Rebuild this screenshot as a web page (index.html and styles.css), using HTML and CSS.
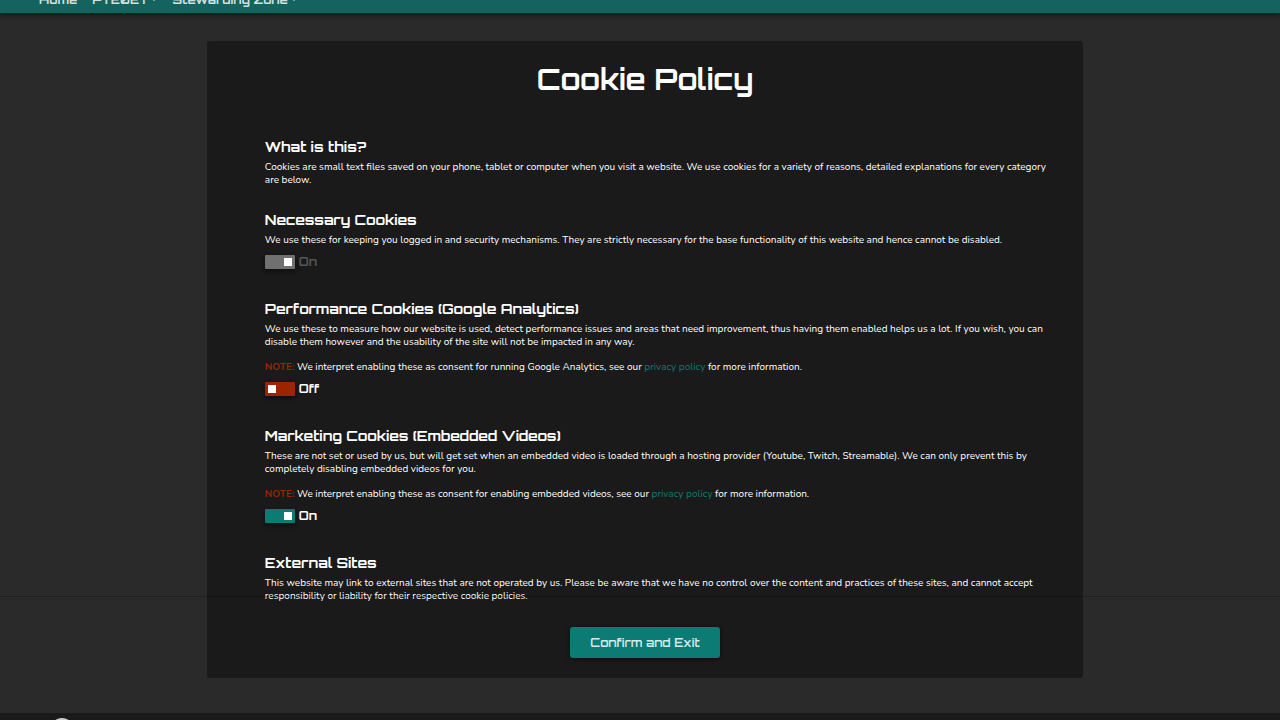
FILE: index.html
```html
<!DOCTYPE html>
<html lang="en">
<head>
  <meta charset="UTF-8">
  <meta name="viewport" content="width=device-width, initial-scale=1.0">
  <title>Cookie Policy</title>
  <link rel="stylesheet" href="styles.css">
</head>
<body>
  <nav class="navbar">
    <a class="nav-link" href="#">Home</a>
    <a class="nav-link" href="#">PTE0ET<span class="caret"></span></a>
    <a class="nav-link" href="#">Stewarding Zone<span class="caret"></span></a>
  </nav>

  <main class="content">
    <div class="policy">
      <h1>Cookie Policy</h1>

      <section>
        <h2>What is this?</h2>
        <p>Cookies are small text files saved on your phone, tablet or computer when you visit a website. We use cookies for a variety of reasons, detailed explanations for every category<br>are below.</p>
      </section>

      <section>
        <h2>Necessary Cookies</h2>
        <p>We use these for keeping you logged in and security mechanisms. They are strictly necessary for the base functionality of this website and hence cannot be disabled.</p>
        <label class="toggle">
          <input type="checkbox" checked disabled>
          <span class="state-on">On</span><span class="state-off">Off</span>
        </label>
      </section>

      <section>
        <h2>Performance Cookies (Google Analytics)</h2>
        <p>We use these to measure how our website is used, detect performance issues and areas that need improvement, thus having them enabled helps us a lot. If you wish, you can<br>disable them however and the usability of the site will not be impacted in any way.</p>
        <p class="note"><b>NOTE:</b> We interpret enabling these as consent for running Google Analytics, see our <a href="#">privacy policy</a> for more information.</p>
        <label class="toggle">
          <input type="checkbox">
          <span class="state-on">On</span><span class="state-off">Off</span>
        </label>
      </section>

      <section>
        <h2>Marketing Cookies (Embedded Videos)</h2>
        <p>These are not set or used by us, but will get set when an embedded video is loaded through a hosting provider (Youtube, Twitch, Streamable). We can only prevent this by<br>completely disabling embedded videos for you.</p>
        <p class="note"><b>NOTE:</b> We interpret enabling these as consent for enabling embedded videos, see our <a href="#">privacy policy</a> for more information.</p>
        <label class="toggle">
          <input type="checkbox" checked>
          <span class="state-on">On</span><span class="state-off">Off</span>
        </label>
      </section>

      <section>
        <h2>External Sites</h2>
        <p>This website may link to external sites that are not operated by us. Please be aware that we have no control over the content and practices of these sites, and cannot accept<br>responsibility or liability for their respective cookie policies.</p>
      </section>

      <button class="confirm" type="button">Confirm and Exit</button>
    </div>
  </main>

  <footer class="footer">
    <svg width="24" height="24" viewBox="0 0 24 24"><circle cx="12" cy="12" r="11" fill="none" stroke="#ccc" stroke-width="2"/></svg>
  </footer>
</body>
</html>
```

FILE: styles.css
```css
* {
  box-sizing: border-box;
}

html {
  scrollbar-width: none;
}

body {
  margin: 0;
  background: #2a2a2a;
  color: #fff;
  font-family: Nunito, "Open Sans", sans-serif;
  font-size: 10px;
  line-height: 13px;
}

h1,
h2,
.navbar,
.toggle,
.confirm {
  font-family: Orbitron, Inter, sans-serif;
}

/* top bar, scrolled partly out of view */
.navbar {
  display: flex;
  align-items: center;
  gap: 15px;
  height: 28px;
  margin-top: -15px;
  padding: 0 39px;
  background: #14635f;
  box-shadow: 0 2px 6px rgba(0, 0, 0, 0.5);
}

.nav-link {
  display: flex;
  align-items: center;
  gap: 3px;
  color: #d0e0df;
  font-size: 12px;
  font-weight: 700;
  text-decoration: none;
}

.caret {
  border: 3px solid transparent;
  border-top-color: currentColor;
  border-bottom: 0;
}

.content {
  position: relative;
  padding: 28px 0 35px 10px;
}

/* divider line across the page */
.content::after {
  content: "";
  position: absolute;
  left: 0;
  right: 0;
  bottom: 116px;
  height: 1px;
  background: rgba(0, 0, 0, 0.25);
}

.policy {
  width: 69%;
  margin: 0 auto;
  padding: 20px 58px;
  background: #1a1a1a;
  border-radius: 3px;
}

h1 {
  margin: 0 0 40px;
  font-size: 29px;
  font-weight: 700;
  line-height: 37px;
  text-align: center;
}

section {
  margin-bottom: 24px;
}

h2 {
  margin: 0 0 5px;
  font-size: 14px;
  font-weight: 700;
  line-height: 18px;
}

p {
  margin: 0;
  white-space: nowrap;
}

.note {
  margin-top: 12px;
}

.note b {
  color: #9c2400;
}

.note a {
  color: #0b7b74;
  text-decoration: none;
}

.toggle {
  display: flex;
  align-items: center;
  gap: 4px;
  margin: 7px 0 30px;
  font-size: 12px;
  font-weight: 700;
  line-height: 16px;
}

.toggle input {
  appearance: none;
  display: flex;
  align-items: center;
  width: 30px;
  height: 14px;
  margin: 0;
  padding: 0 3px;
  background: #9c2400;
  border-radius: 1px;
  box-shadow: 0 2px 4px rgba(0, 0, 0, 0.5);
}

.toggle input::before {
  content: "";
  width: 8px;
  height: 8px;
  background: #fff;
}

.toggle input:checked {
  justify-content: flex-end;
  background: #0b7b74;
}

.toggle input:disabled {
  background: #707070;
}

.toggle input:disabled ~ span {
  color: #555;
}

.state-on,
.toggle input:checked ~ .state-off {
  display: none;
}

.toggle input:checked ~ .state-on {
  display: inline;
}

.confirm {
  display: block;
  margin: 0 auto;
  padding: 0 20px;
  height: 31px;
  border: 0;
  border-radius: 3px;
  background: #0b7b74;
  color: #d5e8e6;
  font-size: 12px;
  font-weight: 600;
  box-shadow: 0 1px 4px rgba(0, 0, 0, 0.5);
}

.footer {
  padding: 5px 50px;
  background: #1a1a1a;
}
```
